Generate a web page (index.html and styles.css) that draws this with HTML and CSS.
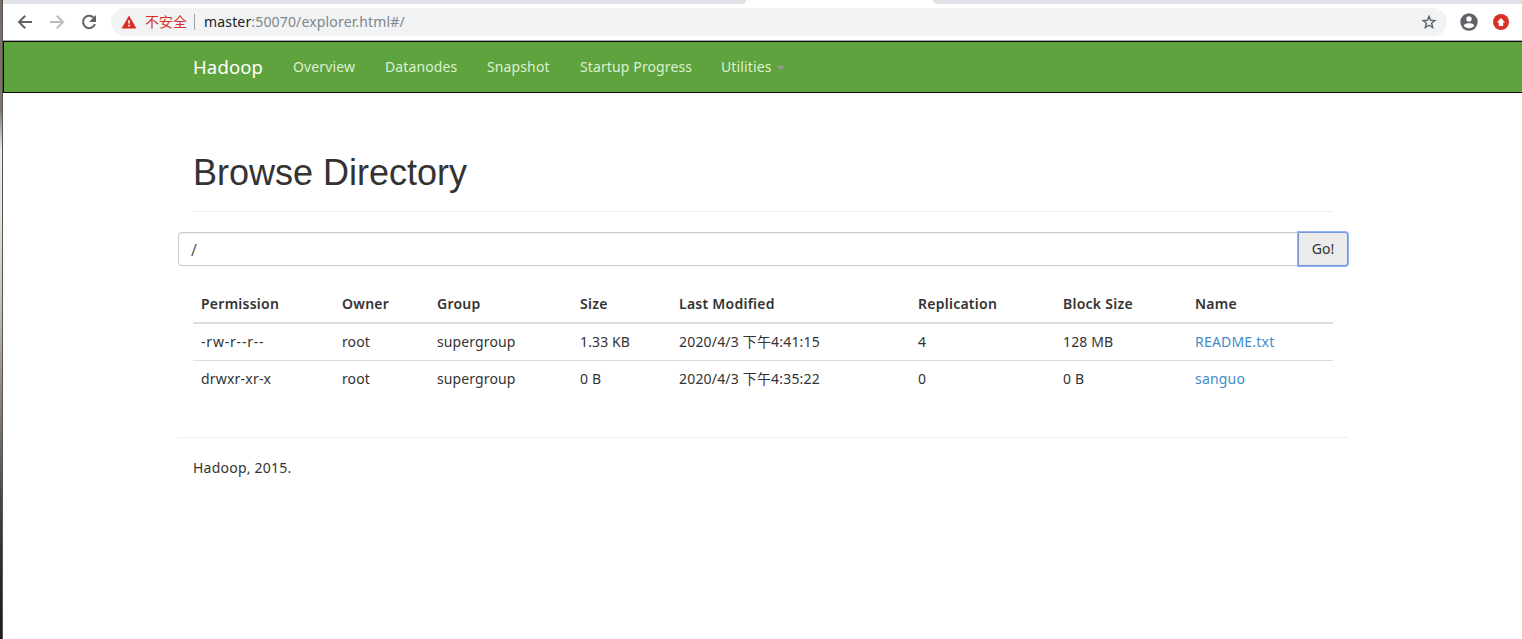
FILE: index.html
```
<!DOCTYPE html>
<html lang="zh-CN">
<head>
    <meta charset="utf-8">
    <title>Browsing HDFS</title>
    <link rel="stylesheet" href="styles.css">
</head>
<body>
    <div class="desktop-edge"></div>
    <div class="window">
        <div class="tabs">
            <div class="tabs-left"></div>
            <div class="tabs-right"></div>
        </div>
        <div class="toolbar">
            <svg class="nav-icon" width="20" height="20" viewBox="0 0 20 20" fill="none" stroke="#5f6368" stroke-width="2"><path d="M17 10H4.500M10.200 3.700L4 10l6.200 6.300"/></svg>
            <svg class="nav-icon" width="20" height="20" viewBox="0 0 20 20" fill="none" stroke="#babcbe" stroke-width="2"><path d="M3 10h12.500M9.800 3.700L16 10l-6.200 6.300"/></svg>
            <svg class="nav-icon" width="20" height="20" viewBox="0 0 20 20"><path d="M14.600 5.500A6.200 6.200 0 1 0 16 12.200" fill="none" stroke="#5f6368" stroke-width="2"/><path d="M17 3v7h-7z" fill="#5f6368"/></svg>
            <div class="address">
                <svg class="warning" width="16" height="14" viewBox="0 0 16 14"><path d="M8 .5L15.500 13.500H.5z" fill="#d93025"/><path d="M7.200 5.300h1.600v3.200H7.200zM7.200 9.800h1.600v1.600H7.200z" fill="#fff"/></svg>
                <span class="insecure">不安全</span>
                <span class="divider"></span>
                <span class="url"><span class="host">master</span>:50070/explorer.html#/</span>
                <svg class="star" width="16" height="16" viewBox="0 0 16 16"><path d="M8 2.300l1.600 4 4.300.3-3.300 2.700 1.100 4.200L8 11.200l-3.700 2.300 1.100-4.200L2.100 6.600l4.300-.3z" fill="none" stroke="#5f6368" stroke-width="1.400"/></svg>
            </div>
            <svg class="profile" width="18" height="18" viewBox="0 0 18 18"><circle cx="9" cy="9" r="8.700" fill="#5f6368"/><circle cx="9" cy="6" r="2.700" fill="#fff"/><path d="M3.600 12.500C4.500 10.900 7 10.300 9 10.300s4.500.6 5.400 2.200C13.200 14.200 11.200 15.300 9 15.300s-4.200-1.100-5.400-2.800z" fill="#fff"/></svg>
            <svg class="update" width="16" height="16" viewBox="0 0 16 16"><circle cx="8" cy="8" r="8" fill="#d93025"/><path d="M8 4l4.200 4.500h-2V12H5.800V8.500h-2z" fill="#fff"/></svg>
        </div>

        <header class="navbar">
            <a class="brand">Hadoop</a>
            <a class="overview">Overview</a>
            <a class="datanodes">Datanodes</a>
            <a class="snapshot">Snapshot</a>
            <a class="startup">Startup Progress</a>
            <a class="utilities">Utilities</a>
            <span class="caret"></span>
        </header>

        <div class="container">
            <div class="page-header">
                <h1>Browse Directory</h1>
            </div>
            <form class="input-group">
                <input type="text" class="path" value="/">
                <button type="button" class="go">Go!</button>
            </form>
            <table class="files">
                <colgroup>
                    <col class="c-permission">
                    <col class="c-owner">
                    <col class="c-group">
                    <col class="c-size">
                    <col class="c-modified">
                    <col class="c-replication">
                    <col class="c-block">
                    <col class="c-name">
                </colgroup>
                <thead>
                    <tr>
                        <th>Permission</th>
                        <th>Owner</th>
                        <th>Group</th>
                        <th>Size</th>
                        <th>Last Modified</th>
                        <th>Replication</th>
                        <th>Block Size</th>
                        <th>Name</th>
                    </tr>
                </thead>
                <tbody>
                    <tr>
                        <td class="mode-file">-rw-r--r--</td>
                        <td>root</td>
                        <td>supergroup</td>
                        <td>1.33 KB</td>
                        <td class="modified">2020/4/3 下午4:41:15</td>
                        <td>4</td>
                        <td>128 MB</td>
                        <td><a class="file">README.txt</a></td>
                    </tr>
                    <tr>
                        <td class="mode-dir">drwxr-xr-x</td>
                        <td>root</td>
                        <td>supergroup</td>
                        <td>0 B</td>
                        <td class="modified">2020/4/3 下午4:35:22</td>
                        <td>0</td>
                        <td>0 B</td>
                        <td><a class="file">sanguo</a></td>
                    </tr>
                </tbody>
            </table>
            <footer class="footer">Hadoop, 2015.</footer>
        </div>
    </div>
</body>
</html>
```

FILE: styles.css
```
* {
    box-sizing: border-box;
}

body {
    display: flex;
    height: 639px;
    margin: 0;
    overflow: hidden;
    background-color: #fff;
    color: #333;
    font-family: "Noto Sans", "Noto Sans CJK SC", sans-serif;
    font-size: 14px;
    line-height: 20px;
    letter-spacing: 0.12px;
}

/* strip of wallpaper left of the browser window */
.desktop-edge {
    width: 3px;
    border-right: 1px solid #575350;
    background: linear-gradient(#786d66 0, #81776f 110px, #eee9e2 150px, #e8e3da 210px, #c9c0b6 300px, #81776e 420px, #4b4542 500px, #292728 580px, #1c1c1e 639px);
}

.window {
    flex: 1;
}

.tabs {
    display: flex;
    justify-content: space-between;
    height: 4px;
}

.tabs-left,
.tabs-right {
    background-color: #dee1e6;
}

.tabs-left {
    width: 743px;
    border-bottom-right-radius: 4px;
}

.tabs-right {
    width: 589px;
    border-bottom-left-radius: 4px;
}

.toolbar {
    display: flex;
    align-items: center;
    height: 37px;
    padding-left: 12px;
    border-bottom: 1px solid #a9a9a9;
}

.nav-icon {
    margin-right: 12px;
}

.address {
    display: flex;
    align-items: center;
    width: 1336px;
    height: 28px;
    padding: 0 10px;
    border-radius: 14px;
    background-color: #f1f3f4;
    white-space: nowrap;
}

.insecure {
    margin-left: 8px;
    color: #d93025;
    letter-spacing: 0;
}

.divider {
    width: 1px;
    height: 16px;
    margin: 0 9px 0 7px;
    background-color: #9aa0a6;
}

.url {
    color: #80868b;
    letter-spacing: 0.16px;
}

.host {
    color: #202124;
}

.star {
    margin-left: auto;
}

.profile {
    margin-left: 13px;
}

.update {
    margin-left: 15px;
}

.navbar {
    display: flex;
    align-items: center;
    height: 52px;
    padding-left: 189px;
    border: 1px solid #080808;
    border-right: none;
    background-color: #5fa33e;
    color: #dcf0d3;
}

.brand {
    width: 100px;
    color: #fff;
    font-size: 18.5px;
    letter-spacing: 0.15px;
}

.overview {
    width: 92px;
}

.datanodes {
    width: 102px;
}

.snapshot {
    width: 93px;
}

.startup {
    width: 141px;
}

.utilities {
    width: 56px;
}

.caret {
    border-top: 4px solid #999;
    border-left: 4px solid transparent;
    border-right: 4px solid transparent;
    margin-top: 2px;
}

.container {
    width: 1170px;
    margin-left: 175px;
}

.page-header {
    margin: 0 15px 20px;
    padding: 60px 0 18px;
    border-bottom: 1px solid #eee;
}

h1 {
    margin: 0;
    font-family: "Liberation Sans", Arial, sans-serif;
    font-size: 36px;
    font-weight: normal;
    line-height: 40px;
    letter-spacing: 0;
}

.input-group {
    display: flex;
    height: 34px;
    margin: 0;
}

.path {
    width: 1120px;
    padding: 7px 12px 5px;
    border: 1px solid #ccc;
    border-right: none;
    border-radius: 4px 0 0 4px;
    box-shadow: inset 0 1px 1px rgba(0, 0, 0, 0.075);
    color: #555;
    font: inherit;
    font-size: 16px;
}

.go {
    width: 50px;
    padding: 0;
    border: 1px solid #7499d8;
    border-radius: 0 3px 3px 0;
    box-shadow: 0 0 0 1px #8fb4f5;
    background-color: #ebebeb;
    color: #333;
    font: inherit;
}

.files {
    width: 1140px;
    margin: 20px 15px 40px;
    border-spacing: 0;
    table-layout: fixed;
}

.c-permission {
    width: 141px;
}

.c-owner {
    width: 95px;
}

.c-group {
    width: 143px;
}

.c-size {
    width: 99px;
}

.c-modified {
    width: 239px;
}

.c-replication {
    width: 145px;
}

.c-block {
    width: 132px;
}

.c-name {
    width: 146px;
}

.files th,
.files td {
    padding: 8px;
    text-align: left;
    white-space: nowrap;
}

.files th {
    border-bottom: 2px solid #ddd;
    font-weight: 600;
    letter-spacing: 0.25px;
}

.files tr + tr td {
    border-top: 1px solid #ddd;
}

.files .mode-file {
    letter-spacing: 0.8px;
}

.files .mode-dir {
    letter-spacing: 0.2px;
}

.modified {
    letter-spacing: 0.18px;
}

.file {
    color: #428bca;
    letter-spacing: 0.2px;
}

.footer {
    padding: 20px 15px;
    border-top: 1px solid #eee;
    letter-spacing: 0.22px;
}
```
